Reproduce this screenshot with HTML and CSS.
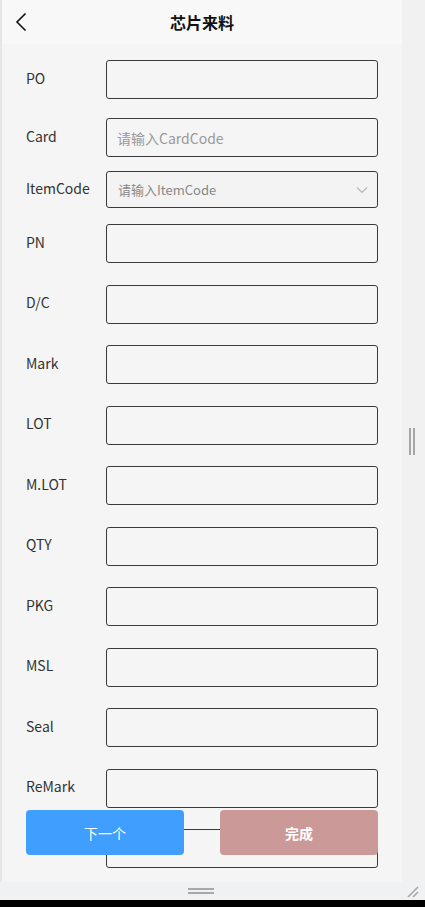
FILE: index.html
```html
<!DOCTYPE html>
<html lang="zh-CN">
<head>
    <meta charset="UTF-8">
    <meta name="viewport" content="width=device-width, initial-scale=1.0">
    <title>芯片来料</title>
    <link rel="stylesheet" href="styles.css">
</head>
<body>
    <div class="device">
        <div class="screen">
            <header class="top-bar">
                <span class="back">
                    <svg width="12" height="20" viewBox="0 0 12 20">
                        <path d="M10.5 1.5 L2 10 L10.5 18.5" fill="none" stroke="#111" stroke-width="1.6"/>
                    </svg>
                </span>
                <h1>芯片来料</h1>
                <span class="spacer"></span>
            </header>

            <form class="material-form">
                <div class="row first">
                    <label>PO</label>
                    <input type="text">
                </div>
                <div class="row card">
                    <label>Card</label>
                    <input type="text" placeholder="请输入CardCode">
                </div>
                <div class="row item">
                    <label>ItemCode</label>
                    <div class="select">
                        <span>请输入ItemCode</span>
                        <svg width="12" height="8" viewBox="0 0 12 8">
                            <path d="M1 1.5 L6 6.5 L11 1.5" fill="none" stroke="#b5b5b5" stroke-width="1.1"/>
                        </svg>
                    </div>
                </div>
                <div class="row pn">
                    <label>PN</label>
                    <input type="text">
                </div>
                <div class="row"><label>D/C</label><input type="text"></div>
                <div class="row"><label>Mark</label><input type="text"></div>
                <div class="row"><label>LOT</label><input type="text"></div>
                <div class="row"><label>M.LOT</label><input type="text"></div>
                <div class="row"><label>QTY</label><input type="text"></div>
                <div class="row"><label>PKG</label><input type="text"></div>
                <div class="row"><label>MSL</label><input type="text"></div>
                <div class="row"><label>Seal</label><input type="text"></div>
                <div class="row"><label>ReMark</label><input type="text"></div>
                <div class="row"><label></label><input type="text"></div>
            </form>

            <div class="actions">
                <button type="button" class="btn-next">下一个</button>
                <button type="button" class="btn-done">完成</button>
            </div>
        </div>

        <div class="side-strip">
            <span class="grip-v"></span>
        </div>

        <div class="bottom-strip">
            <span class="grip-h"></span>
        </div>
        <div class="corner">
            <svg width="14" height="14" viewBox="0 0 14 14">
                <path d="M13 3 L3 13 M13 8 L8 13" stroke="#a8a8a8" stroke-width="1.6"/>
            </svg>
        </div>

        <div class="black-bar"></div>
    </div>
</body>
</html>
```

FILE: styles.css
```css
body {
    margin: 0;
    padding: 0;
    background-color: #f0f1f3;
    font-family: "Noto Sans CJK SC", "Open Sans", sans-serif;
    color: #333;
}

.device {
    display: grid;
    grid-template-columns: 402px 23px;
    grid-template-rows: 882px 18px 7px;
    width: 425px;
}

.screen {
    position: relative;
    overflow: hidden;
    background-color: #f5f5f5;
    border-left: 2px solid #e6e6e6;
}

.top-bar {
    display: flex;
    align-items: center;
    height: 44px;
    background-color: #f8f8f8;
}

.back,
.spacer {
    width: 40px;
}

.back {
    display: flex;
    padding-left: 13px;
    box-sizing: border-box;
}

.top-bar h1 {
    flex: 1;
    margin: 0;
    text-align: center;
    font-size: 16px;
    font-weight: bold;
    color: #111;
}

.material-form {
    padding: 16px 24px 0 24px;
}

.row {
    display: flex;
    align-items: center;
    margin-top: 21.5px;
}

.row.first {
    margin-top: 0;
}

.row.card {
    margin-top: 19px;
}

.row.item {
    margin-top: 14px;
}

.row.pn {
    margin-top: 16px;
}

.row label {
    width: 80px;
    padding-bottom: 4px;
    font-size: 14px;
    color: #333;
}

.row input,
.select {
    width: 272px;
    height: 39px;
    box-sizing: border-box;
    border: 1px solid #3a3a3a;
    border-radius: 3px;
    background-color: #f5f5f5;
    padding: 0 10px;
    font-family: inherit;
    font-size: 14px;
}

.row input::placeholder {
    color: #999;
}

.select {
    display: flex;
    align-items: center;
    justify-content: space-between;
    height: 37px;
    padding: 0 9px 0 11px;
    background-color: #f3f3f3;
    font-size: 13px;
    color: #888;
}

.actions {
    position: absolute;
    left: 24px;
    right: 24px;
    bottom: 27px;
    display: flex;
    justify-content: space-between;
}

.actions button {
    width: 158px;
    height: 45px;
    border: none;
    border-radius: 4px;
    color: #fff;
    font-family: inherit;
    font-size: 14px;
    cursor: pointer;
}

.btn-next {
    background-color: #409eff;
}

.btn-done {
    background-color: #cc9999;
    font-weight: bold;
}

.side-strip {
    display: flex;
    align-items: center;
    justify-content: center;
    padding-right: 3px;
    background-color: #f1f1f2;
}

.grip-v {
    width: 2px;
    height: 27px;
    border-left: 2px solid #a5a5a5;
    border-right: 2px solid #a5a5a5;
}

.bottom-strip {
    display: flex;
    align-items: center;
    justify-content: center;
    background-color: #f0f1f3;
}

.grip-h {
    width: 26px;
    height: 2px;
    border-top: 2px solid #a8a8a8;
    border-bottom: 2px solid #a8a8a8;
}

.corner {
    display: flex;
    align-items: center;
    justify-content: center;
    padding-right: 4px;
    background-color: #f0f1f3;
}

.black-bar {
    grid-column: 1 / 3;
    background-color: #000;
}
```
